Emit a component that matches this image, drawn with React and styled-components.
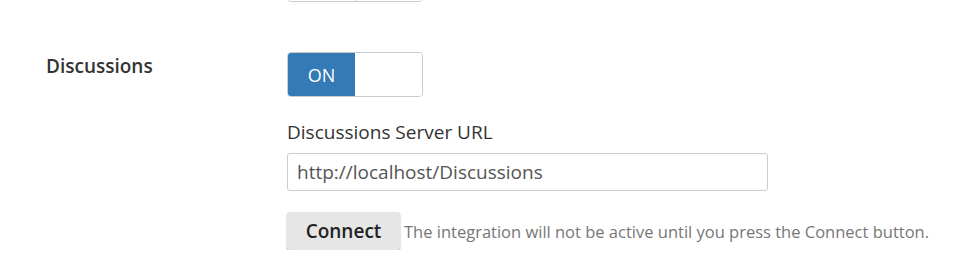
import React from "react";
import styled, { createGlobalStyle } from "styled-components";

const Global = createGlobalStyle`
  html, body { margin: 0; padding: 0; background: #fff; }
  body { font-family: "Open Sans", "Noto Sans", sans-serif; color: #333; }
`;

const Page = styled.div`
  margin-top: -43px;
  display: flex;
  flex-direction: column;
  gap: 50px;
`;

const Row = styled.div`
  display: grid;
  grid-template-columns: 241px 1fr;
  padding-left: 46px;
`;

const Label = styled.div`
  padding-top: 1px;
  font-size: 19px;
  font-weight: 600;
  color: #333;
  line-height: normal;
`;

const Controls = styled.div`
  display: flex;
  flex-direction: column;
  align-items: flex-start;
`;

const Toggle = styled.div`
  box-sizing: border-box;
  width: 136px;
  height: 45px;
  border: 1px solid #ccc;
  border-radius: 4px;
  display: flex;
  overflow: hidden;
  background: #fff;
`;

const ToggleHalf = styled.div`
  width: 67px;
  display: flex;
  align-items: center;
  justify-content: center;
  font-size: 18px;
  color: #fff;
  background: ${(p) => (p.$on ? "#337ab7" : "#fff")};
  border-right: ${(p) => (p.$divider ? "1px solid #ccc" : "none")};
`;

const FieldLabel = styled.div`
  margin-top: 22px;
  font-size: 19px;
  line-height: normal;
  color: #333;
`;

const Input = styled.input`
  box-sizing: border-box;
  margin-top: 8px;
  width: 481px;
  height: 38px;
  border: 1px solid #ccc;
  border-radius: 3px;
  padding: 0 9px;
  font-family: "Open Sans", sans-serif;
  font-size: 19px;
  color: #555;
  outline: none;
`;

const ActionRow = styled.div`
  margin-top: 21px;
  display: flex;
  align-items: center;
  gap: 4px;
`;

const Button = styled.button`
  box-sizing: border-box;
  width: 113px;
  height: 38px;
  border: none;
  border-radius: 3px;
  background: #e6e6e6;
  box-shadow: 0 1px 2px rgba(0, 0, 0, 0.35);
  font-family: "Open Sans", sans-serif;
  font-size: 19px;
  font-weight: 600;
  color: #222;
  padding: 0;
`;

const Help = styled.span`
  font-size: 16.5px;
  color: #777;
  white-space: nowrap;
`;

export default function App() {
  return (
    <>
      <Global />
      <Page>
        <Row>
          <Label />
          <Controls>
            <Toggle>
              <ToggleHalf $divider />
              <ToggleHalf />
            </Toggle>
          </Controls>
        </Row>
        <Row>
          <Label>Discussions</Label>
          <Controls>
            <Toggle>
              <ToggleHalf $on>ON</ToggleHalf>
              <ToggleHalf />
            </Toggle>
            <FieldLabel>Discussions Server URL</FieldLabel>
            <Input defaultValue="http://localhost/Discussions" />
            <ActionRow>
              <Button>Connect</Button>
              <Help>The integration will not be active until you press the Connect button.</Help>
            </ActionRow>
          </Controls>
        </Row>
      </Page>
    </>
  );
}
